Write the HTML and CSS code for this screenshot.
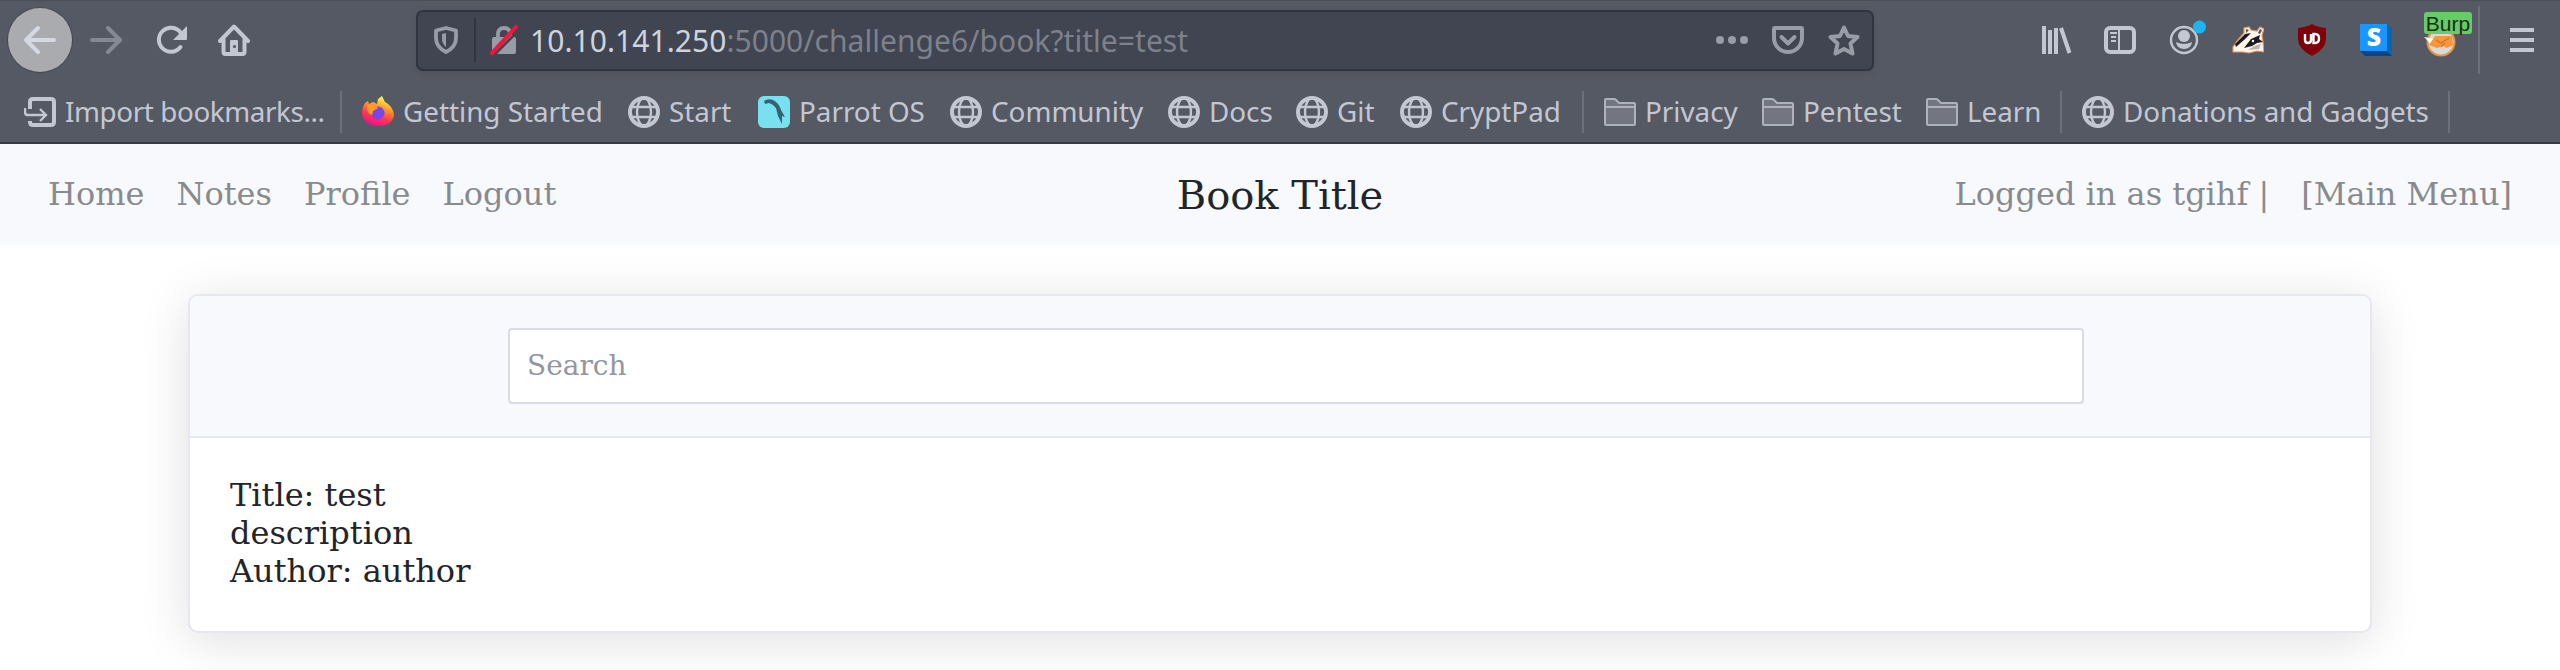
FILE: index.html
```html
<!DOCTYPE html>
<html lang="en">
<head>
<meta charset="utf-8">
<title>Book Title</title>
<link rel="stylesheet" href="styles.css">
</head>
<body>
<svg class="defs" width="0" height="0">
  <symbol id="globe" viewBox="0 0 32 32"><g fill="none" stroke="currentColor"><circle cx="16" cy="16" r="14" stroke-width="4"/><ellipse cx="16" cy="16" rx="7" ry="14" stroke-width="2.4"/><path d="M3 11h26M3 21h26" stroke-width="2.4"/></g></symbol>
  <symbol id="folder" viewBox="0 0 32 32"><path d="M1 28V4q0-1 1-1h8q1 0 2 1l3 3h15q1 0 1 1v20q0 1-1 1H2q-1 0-1-1z" fill="#737680"/><path d="M1 28V4q0-1 1-1h8q1 0 2 1l3 3h15q1 0 1 1v20q0 1-1 1H2q-1 0-1-1zM1 11h30" fill="none" stroke="#aeb2bd" stroke-width="2"/></symbol>
</svg>
<header class="browser">
  <div class="toolbar">
    <div class="nav-buttons">
      <span class="back"><svg width="32" height="32" viewBox="0 0 32 32"><path d="M30 16H2M14 4L2 16L14 28" fill="none" stroke="#d3dae3" stroke-width="4" stroke-linecap="round" stroke-linejoin="round"/></svg></span>
      <svg class="forward" width="32" height="32" viewBox="0 0 32 32"><path d="M2 16h28M18 4l12 12-12 12" fill="none" stroke="#858995" stroke-width="4" stroke-linecap="round" stroke-linejoin="round"/></svg>
      <svg class="reload" width="32" height="32" viewBox="0 0 32 32"><path d="M24.500 23A12 12 0 1 1 24.500 8.500" fill="none" stroke="currentColor" stroke-width="4" stroke-linecap="round"/><path d="M31 2v13q0 1-1 1H17z" fill="currentColor"/></svg>
      <svg class="home" width="32" height="32" viewBox="0 0 32 32"><path d="M2 17L16 2.500 30 17M5.500 15v13q0 2 2 2h17q2 0 2-2V15" fill="none" stroke="currentColor" stroke-width="4" stroke-linecap="round" stroke-linejoin="round"/><path d="M12 29V17q0-1 1-1h6q1 0 1 1v12z" fill="currentColor"/><circle cx="16.500" cy="22.500" r="1.600" fill="#555964"/></svg>
    </div>
    <div class="urlbar">
      <svg class="shield" width="24" height="28" viewBox="0 0 24 28"><path d="M12 2L22 4.500V12q0 9-10 14Q2 21 2 12V4.500z" fill="none" stroke="currentColor" stroke-width="3.800" stroke-linejoin="round"/><path d="M12 7v14q-4-3-4-9V8z" fill="currentColor"/></svg>
      <i class="url-sep"></i>
      <svg class="lock" width="28" height="30" viewBox="0 0 28 30"><path d="M8 13V9q0-6 6-6t6 6v4" fill="none" stroke="#989ca7" stroke-width="3.800"/><path d="M2 14q0-2 2-2h20q2 0 2 2v13q0 2-2 2H4q-2 0-2-2z" fill="#989ca7"/><path d="M4 30L29 5" stroke="#404551" stroke-width="3"/><path d="M2 28L26 2" stroke="#f5143c" stroke-width="4" stroke-linecap="round"/></svg>
      <span class="url"><b>10.10.141.250</b>:5000/challenge6/book?title=test</span>
      <div class="url-actions">
        <svg width="32" height="32" viewBox="0 0 32 32" fill="currentColor"><circle cx="4" cy="16" r="4"/><circle cx="16" cy="16" r="4"/><circle cx="28" cy="16" r="4"/></svg>
        <svg width="32" height="32" viewBox="0 0 32 32" fill="none" stroke="currentColor" stroke-width="4" stroke-linecap="round" stroke-linejoin="round"><path d="M3 4h26q1 0 1 1v9a14 14 0 0 1-28 0V5q0-1 1-1z"/><path d="M9.500 13l6.500 6.500 6.500-6.500"/></svg>
        <svg width="32" height="32" viewBox="0 0 32 32"><path d="M16 3.500l4 8.500 9.500 1-7 6.500 2 10L16 25l-8.500 4.500 2-10-7-6.500 9.500-1z" fill="none" stroke="currentColor" stroke-width="4" stroke-linejoin="round"/></svg>
      </div>
    </div>
    <div class="extensions">
      <svg width="32" height="32" viewBox="0 0 32 32"><path d="M4 2v28M10 6v24M16 4v26M21 4l8.500 25" fill="none" stroke="currentColor" stroke-width="4"/></svg>
      <svg width="32" height="32" viewBox="0 0 32 32" fill="none" stroke="currentColor"><rect x="2" y="4" width="28" height="24" rx="4" stroke-width="4"/><path d="M15 4v24" stroke-width="2"/><path d="M6 9h7M7 13h5M7 17h5" stroke-width="2"/></svg>
      <svg class="account" width="40" height="40" viewBox="0 0 40 40"><circle cx="16" cy="20" r="13" fill="none" stroke="currentColor" stroke-width="2.400"/><circle cx="16" cy="16" r="6" fill="currentColor"/><path d="M8 22q8 4 16 0-1 7-8 7t-8-7z" fill="currentColor"/><circle cx="31.500" cy="7" r="6.500" fill="#1eb4f4"/></svg>
      <svg width="32" height="32" viewBox="0 0 32 32"><path d="M1 23L5 17 12 9 12 4 17 3 19 6 25 7 28 3 32 5 30 11 31 18 32 28 25 27 17 29 11 28 1 28z" fill="#fff4ec" stroke="#e6955b" stroke-width="1.200"/><path d="M3 20L13 10 19 9 12 16 4 23zM12 24L19 15 28 11 27 15 31 18 25 19 20 22z" fill="#1c1c1f"/><path d="M14 5l3 1-3 3zM28 5l2 1-2 4-2-1z" fill="#55504e"/><path d="M16 26l6-4 7-2-2 5z" fill="#b9b5b3"/><circle cx="21" cy="17" r="1.200" fill="#fff"/></svg>
      <svg width="32" height="32" viewBox="0 0 32 32"><path d="M16 0q5 3 14 4v11q0 10-14 17Q2 25 2 15V4Q11 3 16 0z" fill="#800009"/><path d="M9 10v6q0 3 3 3t3-3v-6M17.500 11v8h1.500q4 0 4-4.500t-4-4.500h-1.500z" fill="none" stroke="#fff" stroke-width="2.400"/></svg>
      <svg class="ext-s" width="32" height="32" viewBox="0 0 32 32"><path d="M0 27l5 5h27L27 27z" fill="#07477f"/><path d="M27 0l5 5v27l-5-5z" fill="#0b64ac"/><path d="M0 0h27v27H0z" fill="#1b95ff"/><text class="ext-letter" x="14" y="22" text-anchor="middle">S</text></svg>
      <div class="burp">
        <svg width="32" height="32" viewBox="0 0 32 32"><circle cx="17" cy="17" r="13.500" fill="#d9d9d9" stroke="#e5953e" stroke-width="2"/><path d="M0 12l10 2-1 7z" fill="#fff"/><path d="M5 20l6-9h17l1 9-6 3-4-2-6 2z" fill="#fb9637"/><path d="M12 15l5 3 8-5M17 22l4-4" fill="none" stroke="#c8743a" stroke-width="1.200"/></svg>
        <span class="burp-badge">Burp</span>
      </div>
      <i class="tool-sep"></i>
      <svg class="menu" width="24" height="28" viewBox="0 0 24 28"><path d="M0 4h24M0 14h24M0 24h24" stroke="currentColor" stroke-width="4.200"/></svg>
    </div>
  </div>
  <nav class="bookmarks">
    <a class="w-import"><svg width="32" height="32" viewBox="0 0 32 32" fill="none" stroke="currentColor"><path d="M6 13V6q0-3 3-3h18q3 0 3 3v20q0 3-3 3H9q-3 0-3-3v-1" stroke-width="4"/><path d="M1 12v4q0 3 3 3h17M16 13l6 6-6 6" stroke-width="2.400"/></svg><span>Import bookmarks...</span></a>
    <i></i>
    <a class="w-started"><svg width="32" height="32" viewBox="0 0 32 32"><defs><linearGradient id="flame" x1=".8" y1="0" x2=".4" y2="1"><stop offset=".1" stop-color="#fff44f"/><stop offset=".4" stop-color="#ff9829"/><stop offset=".7" stop-color="#ff3750"/><stop offset="1" stop-color="#e31587"/></linearGradient></defs><path d="M3 7l3-2 1 3 4-2 4 2 1-5 4-3 3 6q8 4 9 13-2 11-16 11T0 18q0-7 3-11z" fill="url(#flame)"/><circle cx="16" cy="17" r="6.500" fill="#7b45e8"/><path d="M5 9q6-3 11 3l-5 3-1 4q-6-2-5-10z" fill="#ff9b2a"/></svg><span>Getting Started</span></a>
    <a class="w-start"><svg width="32" height="32"><use href="#globe"/></svg><span>Start</span></a>
    <a class="w-parrot"><svg width="32" height="32" viewBox="0 0 32 32"><rect width="32" height="32" rx="6" fill="#78e0ef"/><path d="M6 5q4-3 9-1 6 3 8 10l4 7-3-1v8l-4-8-2-8q-3-4-7-5l-4 1z" fill="#35636f"/></svg><span>Parrot OS</span></a>
    <a class="w-community"><svg width="32" height="32"><use href="#globe"/></svg><span>Community</span></a>
    <a class="w-docs"><svg width="32" height="32"><use href="#globe"/></svg><span>Docs</span></a>
    <a class="w-git"><svg width="32" height="32"><use href="#globe"/></svg><span>Git</span></a>
    <a class="w-cryptpad"><svg width="32" height="32"><use href="#globe"/></svg><span>CryptPad</span></a>
    <i></i>
    <a class="w-privacy"><svg width="32" height="32"><use href="#folder"/></svg><span>Privacy</span></a>
    <a class="w-pentest"><svg width="32" height="32"><use href="#folder"/></svg><span>Pentest</span></a>
    <a class="w-learn"><svg width="32" height="32"><use href="#folder"/></svg><span>Learn</span></a>
    <i></i>
    <a class="w-donations"><svg width="32" height="32"><use href="#globe"/></svg><span>Donations and Gadgets</span></a>
    <i></i>
  </nav>
</header>
<nav class="site-nav">
  <div class="links"><a>Home</a><a>Notes</a><a>Profile</a><a>Logout</a></div>
  <h1>Book Title</h1>
  <div class="links user"><a>Logged in as tgihf |</a><a>[Main Menu]</a></div>
</nav>
<main class="card">
  <div class="card-header"><input class="search" type="text" placeholder="Search"></div>
  <div class="card-body">Title: test<br>description<br>Author: author</div>
</main>
</body>
</html>
```
FILE: styles.css
```css
* { box-sizing: border-box; }
body { margin: 0; height: 670px; overflow: hidden; background: #fff; font-family: "DejaVu Serif", serif; color: #212529; }
svg { display: block; flex: none; }
.defs { position: absolute; }
.browser { height: 144px; background: #555964; border-top: 1px solid #4a4e5a; border-bottom: 2px solid #353a46; color: #c3c7d2; font-family: "Noto Sans", sans-serif; }
.toolbar { height: 78px; display: flex; align-items: center; }
.nav-buttons { width: 416px; display: flex; align-items: center; padding-left: 8px; }
.back { width: 64px; height: 64px; border-radius: 50%; background: #aaabaf; display: flex; align-items: center; justify-content: center; box-shadow: 0 0 0 1px #454955; }
.forward { margin-left: 18px; }
.reload { margin-left: 34px; }
.home { margin-left: 30px; }
.urlbar { width: 1458px; height: 61px; display: flex; align-items: center; padding: 0 12px 0 16px; background: #404551; border: 2px solid #2f3440; border-radius: 7px; color: #989ca7; box-shadow: 0 2px 4px #50505d; }
.url-sep { width: 2px; height: 44px; margin-left: 16px; background: #2f3440; }
.lock { margin-left: 14px; }
.url { margin-left: 12px; padding-top: 1px; font-size: 30px; line-height: 44px; letter-spacing: .05px; color: #7d818c; white-space: nowrap; }
.url b { font-weight: 400; color: #cdd4dd; }
.url-actions { margin-left: auto; display: flex; gap: 24px; }
.extensions { flex: 1; display: flex; align-items: center; padding-left: 166px; gap: 32px; }
.account { margin: 0 -8px 0 0; }
.ext-s { overflow: visible; }
.ext-letter { font: 900 25px "Open Sans", sans-serif; fill: #fff; }
.burp { position: relative; }
.burp svg { margin-top: 1px; }
.burp-badge { position: absolute; left: 0; top: -12px; width: 48px; height: 22px; border-radius: 3px; background: #67cb68; color: #18301b; font: 21px/23px "Liberation Sans", sans-serif; text-align: center; }
.tool-sep { width: 2px; height: 68px; margin: 0 -2px 0 -10px; background: #6c707b; }
.bookmarks { height: 63px; display: flex; align-items: center; padding: 3px 0 0 24px; font-size: 27.8px; line-height: 40px; white-space: nowrap; }
.bookmarks a { display: flex; align-items: center; gap: 9px; flex: none; height: 44px; }
.bookmarks span { padding-bottom: 2px; }
.bookmarks i { width: 2px; height: 42px; margin-right: 20px; flex: none; background: #6c707b; }
.w-import { width: 316px; letter-spacing: -.4px; }
.w-started { width: 266px; }
.w-start { width: 130px; }
.w-parrot { width: 192px; }
.w-community { width: 218px; }
.w-docs { width: 128px; }
.w-git { width: 104px; }
.w-cryptpad { width: 182px; }
.w-privacy { width: 158px; }
.w-pentest { width: 164px; }
.w-learn { width: 134px; }
.w-donations { width: 366px; letter-spacing: -.1px; }
.site-nav { height: 101px; display: grid; grid-template-columns: 1fr auto 1fr; align-items: center; padding: 0 48px; background: #f8f9fd; }
.links { display: flex; gap: 32px; padding-bottom: 2px; font-size: 32px; line-height: 48px; color: #888b8e; white-space: nowrap; }
.user { justify-content: flex-end; }
h1 { margin: 0; font-size: 40px; font-weight: 400; line-height: 60px; }
.card { margin: 49px 188px 0; height: 339px; border: 2px solid #e5e8f1; border-radius: 10px; background: #fff; box-shadow: 0 8px 50px rgba(0,0,0,.13); }
.card-header { height: 142px; padding: 32px 286px 0 318px; border-bottom: 2px solid #e5e8f1; background: #f8f9fd; border-radius: 8px 8px 0 0; }
.search { width: 100%; height: 76px; border: 2px solid #d9dce8; border-radius: 4px; padding: 0 17px 1px; background: #fff; font: 28px "DejaVu Serif", serif; }
.search::placeholder { color: #9295a3; opacity: 1; }
.card-body { padding: 38px 40px; font-size: 32px; line-height: 38px; }
```
